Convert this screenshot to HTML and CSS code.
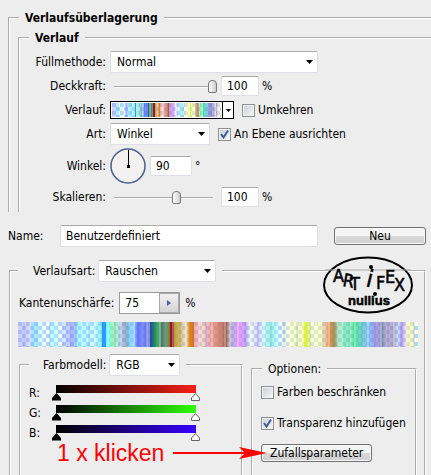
FILE: index.html
```html
<!DOCTYPE html>
<html lang="de">
<head>
    <meta charset="UTF-8">
    <title>Verlaufsüberlagerung</title>
    <link rel="stylesheet" href="styles.css">
</head>

<body>
    <fieldset class="group effect">
        <legend>Verlaufsüberlagerung</legend>
        <fieldset class="group gradient">
            <legend>Verlauf</legend>
            <div class="rows">
                <label for="mode">Füllmethode:</label>
                <div class="row">
                    <select id="mode" class="wide"><option>Normal</option></select>
                </div>
                <label for="opacity">Deckkraft:</label>
                <div class="row">
                    <input type="range" id="opacity" class="slider" value="100">
                    <input type="text" class="num" value="100" aria-label="Deckkraft in Prozent"><span>%</span>
                </div>
                <label for="preview">Verlauf:</label>
                <div class="row">
                    <button type="button" id="preview" class="picker"><span class="noise"></span><span class="arrow"></span></button>
                    <label class="check"><input type="checkbox">Umkehren</label>
                </div>
                <label for="style">Art:</label>
                <div class="row">
                    <select id="style" class="mid"><option>Winkel</option></select>
                    <label class="check"><input type="checkbox" checked>An Ebene ausrichten</label>
                </div>
                <label for="angle">Winkel:</label>
                <div class="row angle">
                    <svg width="36" height="36" viewBox="0 0 36 36">
                        <circle cx="18" cy="18" r="17" fill="#f3f2f0" stroke="#4a5f8c" stroke-width="1.5"/>
                        <path d="M18.500 2V18" stroke="#000"/>
                        <rect x="17" y="17" width="3" height="3"/>
                    </svg>
                    <input type="text" id="angle" class="num" value="90"><span>°</span>
                </div>
                <label for="scale">Skalieren:</label>
                <div class="row">
                    <input type="range" id="scale" class="slider" value="63">
                    <input type="text" class="num" value="100" aria-label="Skalieren in Prozent"><span>%</span>
                </div>
            </div>
        </fieldset>
    </fieldset>

    <div class="name">
        <label for="name">Name:</label>
        <input type="text" id="name" value="Benutzerdefiniert">
        <button type="button" class="btn">Neu</button>
    </div>

    <fieldset class="group editor">
        <legend><label for="type">Verlaufsart:</label><select id="type" class="type"><option>Rauschen</option></select></legend>
        <svg class="logo" width="92" height="60" viewBox="0 0 92 60">
            <ellipse cx="46" cy="30" rx="44" ry="27.500" fill="#ededed" stroke="#000" stroke-width="2"/>
            <path d="M3 15H89" stroke="#aaa"/>
            <g class="letters">
                <text x="11" y="27">A</text>
                <text x="20" y="31" transform="rotate(10 20 31)">R</text>
                <text x="28" y="35">T</text>
                <text x="43" y="31" transform="rotate(14 43 31)" class="tall">i</text>
                <text x="54" y="34">F</text>
                <text x="63" y="28">E</text>
                <text x="72" y="36">X</text>
            </g>
            <circle cx="49" cy="12" r="2"/>
            <circle cx="53" cy="39" r="2"/>
            <text x="26" y="50" class="nullius">nullius</text>
        </svg>
        <div class="rough">
            <label for="rough">Kantenunschärfe:</label>
            <span class="spin"><input type="text" id="rough" value="75"><button type="button" aria-label="Regler öffnen"><svg width="4" height="6" viewBox="0 0 4 6"><path d="M0 0L4 3L0 6Z" fill="#4a5f9c"/></svg></button></span>
            <span>%</span>
        </div>
        <div class="noise strip"></div>
        <div class="columns">
            <fieldset class="group model">
                <legend><label for="model">Farbmodell:</label><select id="model" class="rgb"><option>RGB</option></select></legend>
                <div class="channel red">
                    <span>R:</span>
                    <div class="ramp"><input type="range" class="low" value="0" aria-label="Rot von"><input type="range" class="high" value="100" aria-label="Rot bis"></div>
                </div>
                <div class="channel green">
                    <span>G:</span>
                    <div class="ramp"><input type="range" class="low" value="0" aria-label="Grün von"><input type="range" class="high" value="100" aria-label="Grün bis"></div>
                </div>
                <div class="channel blue">
                    <span>B:</span>
                    <div class="ramp"><input type="range" class="low" value="0" aria-label="Blau von"><input type="range" class="high" value="100" aria-label="Blau bis"></div>
                </div>
                <div class="note">1 x klicken
                    <svg width="94" height="14" viewBox="0 0 94 14">
                        <path d="M0 7H72" stroke="#f00" stroke-width="2"/>
                        <path d="M94 7L66 1L72 7L66 13Z" fill="#f00"/>
                    </svg>
                </div>
            </fieldset>
            <fieldset class="group options">
                <legend>Optionen:</legend>
                <label class="check"><input type="checkbox">Farben beschränken</label>
                <label class="check"><input type="checkbox" checked>Transparenz hinzufügen</label>
                <button type="button" class="btn">Zufallsparameter</button>
            </fieldset>
        </div>
    </fieldset>
</body>
</html>
```

FILE: styles.css
```css
* {
    box-sizing: border-box;
}

body {
    display: flex;
    flex-direction: column;
    margin: 0;
    background-color: #ededed;
    color: #000;
    font: 12px/16px "DejaVu Sans Condensed", Tahoma, "Noto Sans", sans-serif;
}

input,
select,
button {
    margin: 0;
    font: inherit;
    color: inherit;
}

/* group boxes */
.group {
    min-width: 0;
    margin: 0;
    padding: 0;
    border: 2px groove #fff;
    border-bottom: 0;
}

legend {
    padding: 0 6px;
}

.effect {
    margin: 10px 0 0 8px;
    border-right: 0;
}

.effect > legend,
.gradient > legend {
    margin-left: 9px;
    font-weight: bold;
}

.gradient {
    margin: 4px 0 0 8px;
    border-right: 0;
}

/* text boxes and drop-downs */
input[type="text"],
select {
    height: 20px;
    padding: 0 5px;
    border: 1px solid #dde0e8;
    border-top-color: #aaa;
    border-radius: 2px;
    background-color: #fff;
}

select {
    height: 22px;
    padding: 0 6px;
    appearance: none;
    background: #fff url("data:image/svg+xml,%3Csvg xmlns='http://www.w3.org/2000/svg' width='7' height='4'%3E%3Cpath d='M0 0H7L3.500 4Z'/%3E%3C/svg%3E") no-repeat right 4px center;
}

.wide {
    width: 208px;
}

.mid {
    width: 100px;
}

.num {
    width: 38px;
}

.rows {
    display: grid;
    grid-template-columns: 86px 1fr;
    column-gap: 4px;
    row-gap: 2px;
    align-items: center;
    padding: 5px 0 4px;
}

.rows > label {
    text-align: right;
}

.row {
    display: flex;
    align-items: center;
    min-height: 22px;
}

.row .num + span {
    margin-left: 3px;
}

.slider {
    width: 107px;
    height: 20px;
    margin-right: 4px;
    appearance: none;
    background: linear-gradient(#aaa 50%, #fafafa 50%) no-repeat 4px 10px / 99px 2px;
}

.slider::-webkit-slider-thumb {
    appearance: none;
    width: 9px;
    height: 13px;
    border: 1px solid #777;
    border-radius: 4px 4px 2px 2px;
    background: linear-gradient(90deg, #fff, #ccc);
}

.picker {
    display: flex;
    width: 124px;
    height: 18px;
    padding: 0;
    border: 1px solid #000;
    background-color: #fff;
}

.picker .noise {
    flex: 1;
    margin: 1px;
}

.picker .arrow {
    width: 11px;
    border-left: 1px solid #000;
    background: url("data:image/svg+xml,%3Csvg xmlns='http://www.w3.org/2000/svg' width='5' height='3'%3E%3Cpath d='M0 0H5L2.500 3Z'/%3E%3C/svg%3E") no-repeat center;
}

.check {
    display: flex;
    align-items: center;
    gap: 3px;
    margin-left: 8px;
}

.check input {
    width: 13px;
    height: 13px;
    appearance: none;
    border: 1px solid #8e8f8f;
    background: linear-gradient(135deg, #c8ccd2, #f8f8f8);
    box-shadow: inset 0 0 0 1px #f4f4f4;
}

.check input:checked {
    background: url("data:image/svg+xml,%3Csvg xmlns='http://www.w3.org/2000/svg' width='11' height='11'%3E%3Cpath d='M2 5L4.500 8.500L9 1.500' fill='none' stroke='%23405c9c' stroke-width='2'/%3E%3C/svg%3E") no-repeat center, linear-gradient(135deg, #c8ccd2, #f8f8f8);
}

.angle {
    min-height: 37px;
}

.angle .num {
    width: 42px;
    margin-left: 4px;
}

.btn {
    height: 18px;
    padding: 0 8px;
    border: 1px solid #707070;
    border-radius: 3px;
    background: linear-gradient(#f4f4f4 50%, #d8d8d8 50%, #d0d0d0);
    box-shadow: inset 0 0 0 1px #f8f8f8;
    line-height: 14px;
}

.name {
    display: flex;
    align-items: center;
    margin: 13px 5px 13px 8px;
}

.name label {
    width: 52px;
}

.name input {
    flex: 1;
    min-width: 0;
    height: 22px;
}

.name .btn {
    width: 92px;
    margin-left: 16px;
}

/* noise gradient editor */
.editor {
    position: relative;
    margin: 0 5px 0 9px;
}

.editor > legend,
.model > legend {
    display: flex;
    align-items: center;
    gap: 3px;
}

.editor > legend {
    margin-left: 7px;
    padding-left: 15px;
}

.type {
    width: 118px;
}

.rgb {
    width: 71px;
}

.logo {
    position: absolute;
    top: -27px;
    right: 10px;
}

.letters {
    font: 18px "DejaVu Sans Condensed", sans-serif;
    stroke: #000;
    stroke-width: 0.5px;
}

.letters .tall {
    font-size: 24px;
}

.nullius {
    font: bold 13px "Liberation Sans", Arial, sans-serif;
    stroke: #000;
    stroke-width: 0.5px;
}

.rough {
    display: flex;
    align-items: center;
    gap: 5px;
    margin: 10px 0 8px 8px;
}

.spin {
    display: flex;
    width: 61px;
    height: 22px;
    border: 1px solid #999;
}

.spin input[type="text"] {
    flex: 1;
    min-width: 0;
    height: auto;
    border: 0;
    border-radius: 0;
}

.spin button {
    display: flex;
    align-items: center;
    justify-content: center;
    width: 20px;
    padding: 0;
    border: 1px solid #aaa;
    background: linear-gradient(#f0f0f0, #d4d4d4);
}

/* fine stripes, colour bands, transparency checkers */
.noise {
    background:
        repeating-linear-gradient(90deg, #fff0 0 5px, #6070c028 5px 7px, #fff0 7px 11px, #fff4 11px 13px),
        linear-gradient(90deg,
            #a0a0ff80, #a0a0ff70 3%, #40d0ff80 4%, #80f0ff60 5%, #fff0 7%, #80f0ff80 9%, #fff0 11%,
            #7080ffa0 13%, #8090ff90 14%, #60f0ff80 15%, #80f0ff60 19%, #60e8ffb0 21%, #3098ff 21% 22%,
            #50ffffd0 22% 23%, #80f098c0 23%, #90f0b0b0 25%, #90b0e080 25%, #7090b0b0 27%, #60d0ffb0 28%, #70c0ffb0 29%,
            #5060ffe0 30%, #7080ffd0 31%, #5060f0e0 32%, #8090c0e0 33%, #2040d0 33%, #208050 34%, #40b070 35%,
            #507868 36%, #70a080 37%, #788010 38%, #908010 38%, #a01030 38% 39%, #b0a020 39%, #d8b060b0 41%,
            #f0d0b080 42%, #e08010 43%, #e07818 44%, #f08080b0 44%, #ffb0a070 46%, #f08080b0 48%, #d88060e0 50%,
            #c07060e0 51%, #904840e0 52%, #d0b0b0a0 53%, #a090f0b0 54%, #f080ffd0 55%, #b080f0a0 57%, #f0f8d060 58%,
            #c0a0ff70 60%, #b0e0ff50 61%, #80f0d8c0 63%, #80f0ff60 65%, #fff0 66%, #ffffa080 68%, #ffff8080 71%,
            #d8f028 72%, #ffff9080 73%, #ffff9080 76%, #f0a060b0 77%, #d88850e0 78%, #a08030e0 79%, #90e0a090 80%,
            #50e0a0b0 82%, #60f0a090 83%, #30e080d0 84%, #50c8c0c0 86%, #60a0ffb0 88%, #8890d8d0 89%, #a080e0c0 90%,
            #607898d0 91%, #a890c8b0 92%, #9080b0b0 94%, #80a0ff50 95%, #a080f0b0 96%, #ffd0c080 97%, #ffff8090 98%, #fff0),
        repeating-conic-gradient(#fff 0 25%, #b0d4f4 0 50%) 0 0 / 8px 8px;
}

.strip {
    height: 25px;
    margin: 0 6px 0 7px;
}

.columns {
    display: grid;
    grid-template-columns: 224fr 166fr;
    gap: 8px;
    margin: 7px 7px 0 8px;
}

.model {
    min-height: 121px;
    padding-left: 8px;
}

.model > legend {
    padding-left: 14px;
}

.options {
    margin: 7px 0 0;
    padding-left: 8px;
}

.options > legend {
    margin-left: 1px;
}

.options .check {
    margin: 7px 0 15px;
    white-space: nowrap;
}

.options .check + .check {
    margin: 0 0 13px;
}

.channel {
    display: flex;
    height: 20px;
    margin-right: 45px;
}

.model > legend + .channel {
    margin-top: 9px;
}

.channel span {
    width: 27px;
}

.ramp {
    display: grid;
    flex: 1;
    height: 8px;
    background: linear-gradient(90deg, #000, var(--end));
}

.red {
    --end: #f82018;
}

.green {
    --end: #30ff08;
}

.blue {
    --end: #3800ff;
}

.ramp input {
    grid-area: 1 / 1;
    height: 8px;
    margin: 8px -4px 0;
    appearance: none;
    background: none;
    pointer-events: none;
}

.ramp input::-webkit-slider-thumb {
    appearance: none;
    width: 9px;
    height: 8px;
    pointer-events: auto;
    background: url("data:image/svg+xml,%3Csvg xmlns='http://www.w3.org/2000/svg' width='9' height='8'%3E%3Cpath d='M4.500 0L9 5V7.500H0V5Z'/%3E%3C/svg%3E");
}

.ramp .high::-webkit-slider-thumb {
    background: url("data:image/svg+xml,%3Csvg xmlns='http://www.w3.org/2000/svg' width='9' height='8'%3E%3Cpath d='M4.500 .5L8.500 5V7.500H.5V5Z' fill='%23fff' stroke='%23666'/%3E%3C/svg%3E");
}

/* callout lies over both boxes */
.note {
    display: flex;
    align-items: center;
    gap: 9px;
    position: relative;
    z-index: 1;
    margin: -3px 0 0 28px;
    color: #f00;
    font: 23px/22px "Liberation Sans", Arial, sans-serif;
    white-space: nowrap;
}

.note svg {
    flex: none;
}
```
